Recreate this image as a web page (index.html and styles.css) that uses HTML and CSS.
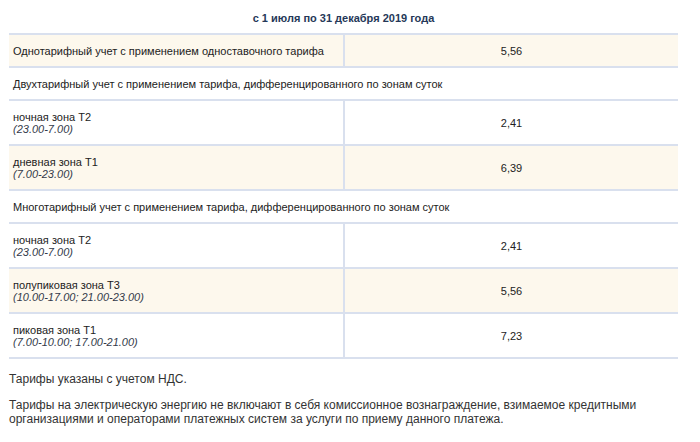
FILE: index.html
```html
<!DOCTYPE html>
<html lang="ru">
<head>
<meta charset="utf-8">
<link rel="stylesheet" href="styles.css">
</head>
<body>
<div class="page">
  <div class="period">с 1 июля по 31 декабря 2019 года</div>
  <table class="tariffs">
    <tr class="alt">
      <td class="name">Однотарифный учет с применением одноставочного тарифа</td>
      <td class="val">5,56</td>
    </tr>
    <tr>
      <td class="section" colspan="2">Двухтарифный учет с применением тарифа, дифференцированного по зонам суток</td>
    </tr>
    <tr>
      <td class="name">ночная зона Т2<br><i>(23.00-7.00)</i></td>
      <td class="val">2,41</td>
    </tr>
    <tr class="alt">
      <td class="name">дневная зона Т1<br><i>(7.00-23.00)</i></td>
      <td class="val">6,39</td>
    </tr>
    <tr>
      <td class="section" colspan="2">Многотарифный учет с применением тарифа, дифференцированного по зонам суток</td>
    </tr>
    <tr>
      <td class="name">ночная зона Т2<br><i>(23.00-7.00)</i></td>
      <td class="val">2,41</td>
    </tr>
    <tr class="alt">
      <td class="name">полупиковая зона Т3<br><i>(10.00-17.00; 21.00-23.00)</i></td>
      <td class="val">5,56</td>
    </tr>
    <tr>
      <td class="name">пиковая зона Т1<br><i>(7.00-10.00; 17.00-21.00)</i></td>
      <td class="val">7,23</td>
    </tr>
  </table>
  <p class="note first">Тарифы указаны с учетом НДС.</p>
  <p class="note">Тарифы на электрическую энергию не включают в себя комиссионное вознаграждение, взимаемое кредитными организациями и операторами платежных систем за услуги по приему данного платежа.</p>
</div>
</body>
</html>
```

FILE: styles.css
```css
html, body {
  margin: 0;
  padding: 0;
  background: #fff;
}
.page {
  width: 669px;
  padding-left: 9px;
  font-family: "Liberation Sans", Arial, sans-serif;
  color: #222;
}
.period {
  box-sizing: border-box;
  height: 35px;
  line-height: 36px;
  text-align: center;
  font-weight: bold;
  font-size: 11px;
  color: #253858;
  border-bottom: 2px solid #d9e0ee;
}
.tariffs {
  width: 669px;
  border-collapse: collapse;
  font-size: 11px;
  line-height: 12px;
}
.tariffs td {
  padding: 10px 4px 9px;
  border-bottom: 2px solid #d9e0ee;
  vertical-align: middle;
}
.tariffs td.name {
  width: 326px;
}
.tariffs td.val {
  border-left: 2px solid #d9e0ee;
  text-align: center;
}
.tariffs tr.alt td {
  background: #fdf8ed;
}
.tariffs i {
  color: #333a4a;
}
.note {
  margin: 12px 0 0;
  font-size: 12px;
  line-height: 14px;
  color: #333;
}
.note.first {
  margin-top: 13px;
}
```
